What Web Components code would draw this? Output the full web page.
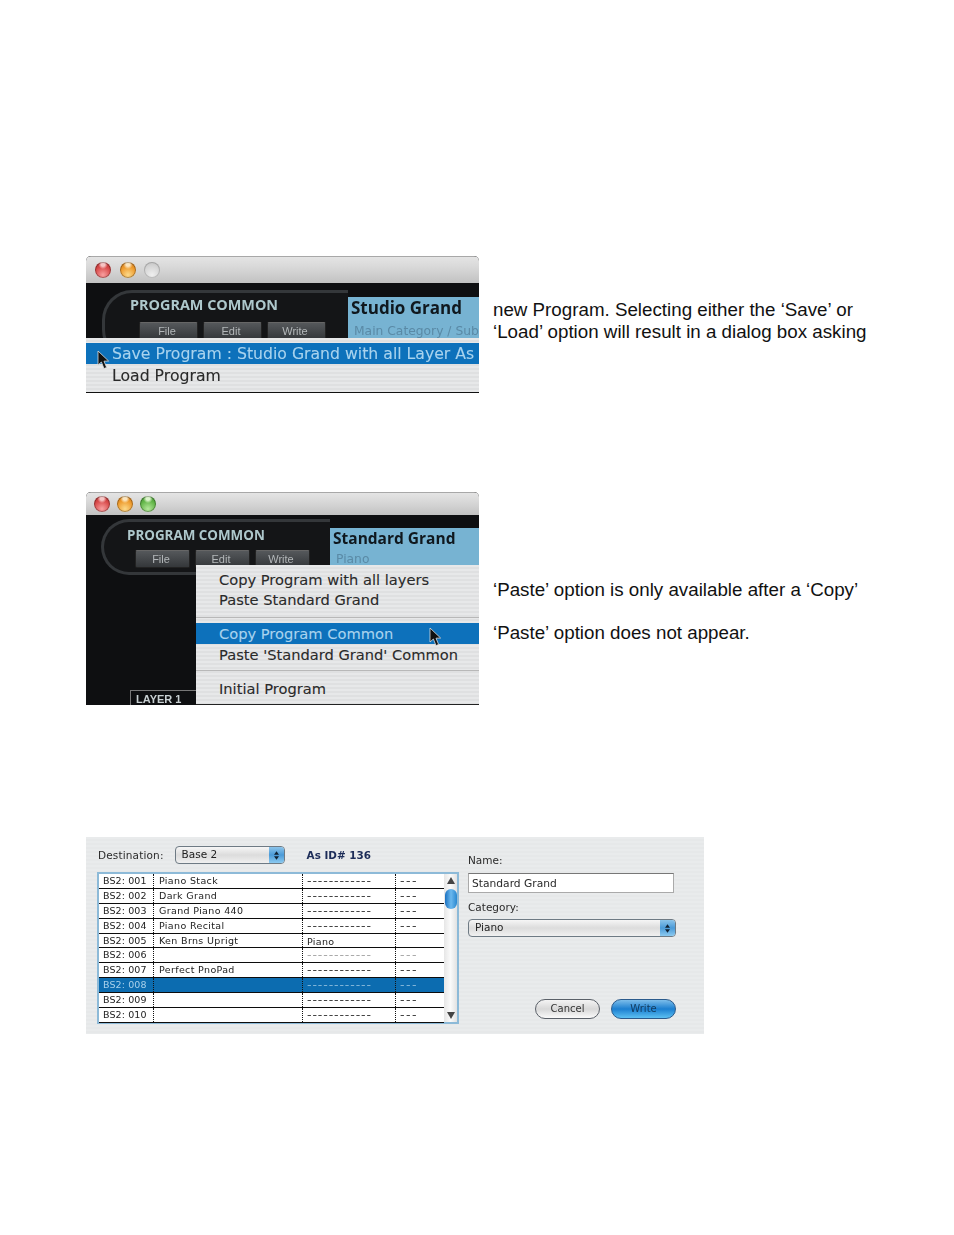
<!DOCTYPE html>
<html>
<head>
<meta charset="utf-8">
<title>Program Common</title>
<style>
  html, body { margin: 0; background: #fff; }
  body { font-family: "Liberation Sans", Arial, sans-serif; }
</style>
</head>
<body>
<manual-page></manual-page>

<script>
const ARROW = `<svg viewBox="0 0 13 20" width="13" height="20"><path d="M1 1 L1 15 L4.4 12 L7 18.6 L9.6 17.4 L7 11.2 L11.6 11 Z" fill="#111" stroke="#ddd" stroke-width=".8"/></svg>`;

class TrafficLights extends HTMLElement {
    constructor() {
        super();
        this.attachShadow({ mode: 'open' });
        this.shadowRoot.innerHTML = `
            <style>
                :host { display: flex; gap: var(--light-gap, 8px); }
                i { display: block; width: 16px; height: 16px; border-radius: 50%; box-shadow: inset 0 0 0 1px rgba(0,0,0,.3); }
                .red { background: radial-gradient(circle at 50% 15%, #f6c4c4 0 12%, transparent 30%), radial-gradient(circle at 50% 80%, #f8a0a0, #d84a4a 55%, #a82a2a); }
                .amber { background: radial-gradient(circle at 50% 15%, #fbe6c0 0 12%, transparent 30%), radial-gradient(circle at 50% 80%, #fbd98a, #ee9a2c 55%, #c06f18); }
                .green { background: radial-gradient(circle at 50% 15%, #dcf4cc 0 12%, transparent 30%), radial-gradient(circle at 50% 80%, #b4e79a, #62b548 55%, #3f8a30); }
                .off { background: radial-gradient(circle at 50% 80%, #efefef, #d4d4d4 60%, #bcbcbc); box-shadow: inset 0 0 0 1px rgba(0,0,0,.18); }
            </style>
            <i class="red"></i><i class="amber"></i><i class="${this.hasAttribute('inactive') ? 'off' : 'green'}"></i>
        `;
    }
}

class SynthWindow extends HTMLElement {
    constructor() {
        super();
        this.attachShadow({ mode: 'open' });
        const buttons = ['File', 'Edit', 'Write'].map(b => `<span class="btn">${b}</span>`).join('');
        this.shadowRoot.innerHTML = `
            <style>
                :host { display: block; position: relative; width: 393px; overflow: hidden; background: #0e0f11; border-radius: 5px 5px 0 0; filter: blur(.35px); font-family: "DejaVu Sans", sans-serif; }
                .title { display: flex; align-items: center; box-sizing: border-box; height: var(--title-h); padding-left: var(--lights-left); padding-bottom: 1px; background: linear-gradient(#e4e4e4, #d8d8d8 40%, #c2c2c2); border-top: 1px solid #a8a8a8; }
                .body { display: flex; align-items: flex-start; padding-left: var(--pill-left); }
                .pill { flex: none; box-sizing: border-box; width: var(--pill-w); height: var(--pill-h); margin-top: var(--pill-top); padding: var(--pill-pad); background: #141517; border: 3px solid #34373a; border-right: 0; border-radius: 30px 0 0 30px; }
                .heading { font: bold var(--head-size)/16px "Open Sans", "DejaVu Sans", sans-serif; color: #aec8cc; white-space: nowrap; }
                .btns { display: flex; gap: var(--btn-gap); margin: var(--btn-top) 0 0 var(--btn-left); }
                .btn { width: var(--btn-w); height: 18px; box-sizing: border-box; padding-right: 3px; text-align: center; font: 11px/16px "Liberation Sans", sans-serif; color: #b4b8ba; background: linear-gradient(#55585b, #34373a); border: 1px solid #222; border-top-color: #666; border-radius: 2px; }
                .patch { flex: none; width: 200px; height: var(--patch-h); margin-top: var(--patch-top); padding: var(--patch-pad); box-sizing: border-box; background: #77b3d2; white-space: nowrap; }
                .name { font: bold var(--name-size)/20px "Open Sans", "DejaVu Sans", sans-serif; color: #10181e; }
                .sub { font: 12.3px/14px "DejaVu Sans", sans-serif; color: #5a8aa6; margin-top: var(--sub-top); padding-left: 3px; }
                ::slotted([slot=menu]) { position: absolute; }
            </style>
            <div class="title"><traffic-lights ${this.hasAttribute('inactive') ? 'inactive' : ''}></traffic-lights></div>
            <div class="body">
                <div class="pill">
                    <div class="heading">PROGRAM COMMON</div>
                    <div class="btns">${buttons}</div>
                </div>
                <div class="patch">
                    <div class="name">${this.getAttribute('patch')}</div>
                    <div class="sub">${this.getAttribute('sub')}</div>
                </div>
            </div>
            <slot></slot>
            <slot name="menu"></slot>
        `;
    }
}

class PopMenu extends HTMLElement {
    constructor() {
        super();
        this.attachShadow({ mode: 'open' });
        this.shadowRoot.innerHTML = `
            <style>
                :host { display: block; box-sizing: border-box; background: repeating-linear-gradient(#e7e8e9 0 2px, #dfe0e1 2px 4px); font-family: "DejaVu Sans", sans-serif; color: #2a2a2a; white-space: nowrap; -webkit-text-stroke: .1px currentColor; }
            </style>
            <slot></slot>
        `;
    }
}

class MenuItem extends HTMLElement {
    constructor() {
        super();
        this.attachShadow({ mode: 'open' });
        this.shadowRoot.innerHTML = `
            <style>
                :host { display: block; height: var(--item-h, 21px); line-height: var(--item-lh, var(--item-h, 21px)); padding-left: var(--item-left, 23px); font-size: var(--item-size, 15px); }
                :host([active]) { background: #0d71bb; color: #a9d3ee; }
            </style>
            <slot></slot>
        `;
    }
}

class SlimSelect extends HTMLElement {
    constructor() {
        super();
        this.attachShadow({ mode: 'open' });
        this.shadowRoot.innerHTML = `
            <style>
                :host { display: flex; box-sizing: border-box; height: 18px; border: 1px solid #6e7a84; border-radius: 4px; overflow: hidden; background: linear-gradient(#f6f6f6, #dcdcdc 50%, #f0f0f0); font: 10.5px/15px "DejaVu Sans", sans-serif; color: #222; }
                .label { flex: 1; padding-left: 6px; }
                .stepper { display: flex; align-items: center; justify-content: center; width: 15px; background: linear-gradient(#8cc4ea, #4a9ad8 50%, #8ccaf0); }
            </style>
            <span class="label"><slot></slot></span>
            <span class="stepper"><svg width="5" height="9" viewBox="0 0 6 10"><path d="M3 0 L6 4 H0 Z M3 10 L0 6 H6 Z" fill="#123"/></svg></span>
        `;
    }
}

class AquaButton extends HTMLElement {
    constructor() {
        super();
        this.attachShadow({ mode: 'open' });
        this.shadowRoot.innerHTML = `
            <style>
                :host { display: block; box-sizing: border-box; width: 65px; height: 20px; text-align: center; border: 1px solid #5a6068; border-radius: 10px; background: linear-gradient(#f4f4f4, #d8d8d8 50%, #fafafa); font: 10px/18px "DejaVu Sans", sans-serif; color: #333; }
                :host([primary]) { background: linear-gradient(#7cbdea, #1c7fd0 50%, #5cc0f2); border-color: #2a5a8c; color: #123a5c; }
            </style>
            <slot></slot>
        `;
    }
}

class ProgramList extends HTMLElement {
    constructor() {
        super();
        this.attachShadow({ mode: 'open' });
        const names = ['Piano Stack', 'Dark Grand', 'Grand Piano 440', 'Piano Recital', 'Ken Brns Uprigt', '', 'Perfect PnoPad', '', '', ''];
        const rows = names.map((name, i) => {
            const id = String(i + 1).padStart(3, '0');
            const isPiano = i === 4;
            const cls = [i === 7 ? 'sel' : '', i === 5 ? 'faint' : ''].join(' ');
            return `<div class="row ${cls}">
                <span class="c">BS2: ${id}</span><span class="c nm">${name}</span>
                <span class="c dash">${isPiano ? '<b>Piano</b>' : '------------'}</span>
                <span class="c dash">${isPiano ? '' : '---'}</span>
            </div>`;
        }).join('');
        this.shadowRoot.innerHTML = `
            <style>
                :host { display: flex; box-sizing: border-box; width: 362px; height: 152px; border: 2px solid #8dbad8; background: #fff; font: 9.5px/14px "DejaVu Sans", sans-serif; color: #222; }
                .rows { width: 345px; }
                .row { display: grid; grid-template-columns: 55px 149px 93px 1fr; box-sizing: border-box; height: 14.9px; border-bottom: 1px solid #0c0c0c; white-space: nowrap; }
                .c { padding-left: 4px; border-right: 1px dotted #111; overflow: hidden; letter-spacing: .1px; }
                .c:last-child { border-right: 0; }
                .nm { padding-left: 5px; letter-spacing: .35px; }
                .dash { color: #444; font-size: 12.5px; letter-spacing: .9px; }
                .dash:last-child { letter-spacing: 1.5px; }
                .dash b { font-weight: normal; font-size: 9.5px; color: #222; letter-spacing: .3px; }
                .faint .dash { color: #aaa; }
                .sel { background: #0c6cb0; color: #a8d0ea; }
                .sel .dash { color: #7fb4d8; }
                .bar { flex: 1; display: flex; flex-direction: column; align-items: center; background: linear-gradient(90deg, #e6e6e6, #fafafa 50%, #e2e2e2); font-size: 0; }
                .thumb { width: 12px; height: 20px; margin-top: 5px; border-radius: 6px; background: linear-gradient(90deg, #1a70c0, #6ab8ee 50%, #2a88d0); }
                .bar svg:last-child { margin-top: auto; margin-bottom: 3px; }
                .bar svg:first-child { margin-top: 3px; }
            </style>
            <div class="rows">${rows}</div>
            <div class="bar">
                <svg width="8" height="7" viewBox="0 0 8 7"><path d="M4 0 L8 7 H0 Z" fill="#444"/></svg>
                <div class="thumb"></div>
                <svg width="8" height="7" viewBox="0 0 8 7"><path d="M4 7 L0 0 H8 Z" fill="#444"/></svg>
            </div>
        `;
    }
}

class WriteDialog extends HTMLElement {
    constructor() {
        super();
        this.attachShadow({ mode: 'open' });
        this.shadowRoot.innerHTML = `
            <style>
                :host { display: flex; box-sizing: border-box; width: 618px; height: 197px; padding: 9px 28px 0 11px; background: repeating-linear-gradient(#e9ebec 0 2px, #e6e8e9 2px 4px); font: 10.5px/14px "DejaVu Sans", sans-serif; color: #2a2a2a; filter: blur(.3px); }
                .left { width: 362px; }
                .dest { display: flex; align-items: center; height: 18px; margin: 0 0 8px 1px; letter-spacing: .15px; }
                .dest slim-select { width: 110px; margin: 0 22px 0 11px; letter-spacing: 0; }
                .dest b { color: #1c2c58; font-size: 10.4px; letter-spacing: 0; }
                .right { flex: 1; margin-left: 9px; display: flex; flex-direction: column; }
                .lbl { height: 14px; }
                .name-label { margin-top: 7px; }
                .input { box-sizing: border-box; width: 206px; height: 20px; margin-top: 6px; padding-left: 3px; border: 1px solid #aaa; border-top-color: #777; background: #fff; font-size: 10.7px; line-height: 19px; }
                .cat-label { margin-top: 7px; }
                .right slim-select { width: 208px; margin-top: 5px; }
                .actions { display: flex; justify-content: flex-end; gap: 11px; margin-top: 62px; }
            </style>
            <div class="left">
                <div class="dest">Destination:<slim-select>Base 2</slim-select><b>As ID# 136</b></div>
                <program-list></program-list>
            </div>
            <div class="right">
                <div class="lbl name-label">Name:</div>
                <div class="input">Standard Grand</div>
                <div class="lbl cat-label">Category:</div>
                <slim-select>Piano</slim-select>
                <div class="actions"><aqua-button>Cancel</aqua-button><aqua-button primary>Write</aqua-button></div>
            </div>
        `;
    }
}

class ManualPage extends HTMLElement {
    constructor() {
        super();
        this.attachShadow({ mode: 'open' });
        this.shadowRoot.innerHTML = `
            <style>
                :host { display: block; box-sizing: border-box; width: 954px; height: 1235px; padding: 256px 0 0 86px; }
                .row { display: flex; gap: 14px; }
                .copy { font: 18.75px/22px "Liberation Sans", Arial, sans-serif; color: #111; white-space: nowrap; }
                .one { height: 137px; }
                .one .copy { padding-top: 43px; }
                .two { height: 213px; margin-top: 99px; }
                .two .copy { padding-top: 87px; line-height: 21.5px; }
                synth-window { height: 100%; flex: none; }
                .dialog { margin-top: 132px; }
                .shot-one {
                    --title-h: 27px; --lights-left: 9px; --light-gap: 8.5px;
                    --pill-left: 16px; --pill-w: 246px; --pill-h: 70px; --pill-top: 7px; --pill-pad: 4px 0 0 25px; --head-size: 14.4px;
                    --btn-w: 59px; --btn-gap: 5px; --btn-top: 9px; --btn-left: 9px;
                    --patch-h: 46px; --patch-top: 14px; --patch-pad: 1px 0 0 3px; --name-size: 17px; --sub-top: 6px;
                }
                .shot-two {
                    --title-h: 23px; --lights-left: 8px; --light-gap: 7px;
                    --pill-left: 15px; --pill-w: 229px; --pill-h: 56px; --pill-top: 4px; --pill-pad: 5px 0 0 23px; --head-size: 13.4px;
                    --btn-w: 55px; --btn-gap: 5px; --btn-top: 7px; --btn-left: 8px;
                    --patch-h: 37px; --patch-top: 13px; --patch-pad: 0 0 0 3px; --name-size: 15.5px; --sub-top: 4px;
                }
                .menu-one { top: 82px; left: 0; right: 0; bottom: 0; padding-top: 5px; border-bottom: 1px solid #111; --item-left: 26px; --item-size: 15.7px; }
                .menu-two { top: 73px; left: 110px; right: 0; bottom: 0; padding-top: 4px; border-bottom: 1px solid #222; --item-size: 14.65px; --item-h: 21px; }
                .menu-two hr { height: 1px; border: 0; margin: 0; background: #b8b8b8; }
                .cursor { position: absolute; z-index: 2; }
                .cursor-one { left: 11px; top: 94px; }
                .cursor-two { left: 343px; top: 135px; }
                .layer { position: absolute; left: 44px; bottom: 0; width: 70px; height: 15px; box-sizing: border-box; padding: 2px 0 0 5px; border: 1px solid #777; border-bottom: 0; font: bold 11px/13px "Liberation Sans", sans-serif; color: #c8d0d2; }
            </style>
            <section class="row one">
                <synth-window class="shot-one" inactive patch="Studio Grand" sub="Main Category / Sub">
                    <pop-menu slot="menu" class="menu-one">
                        <menu-item active style="--item-lh:22px">Save Program : Studio Grand with all Layer As</menu-item>
                        <menu-item style="--item-h:23px">Load Program</menu-item>
                    </pop-menu>
                    <span class="cursor cursor-one">${ARROW}</span>
                </synth-window>
                <div class="copy">new Program. Selecting either the ‘Save’ or<br>‘Load’ option will result in a dialog box asking</div>
            </section>
            <section class="row two">
                <synth-window class="shot-two" patch="Standard Grand" sub="Piano">
                    <span class="layer">LAYER 1</span>
                    <pop-menu slot="menu" class="menu-two">
                        <menu-item style="--item-lh:22px">Copy Program with all layers</menu-item>
                        <menu-item style="--item-lh:20px">Paste Standard Grand</menu-item>
                        <menu-item style="--item-h:6px"></menu-item>
                        <hr>
                        <menu-item style="--item-h:5px"></menu-item>
                        <menu-item active>Copy Program Common</menu-item>
                        <menu-item>Paste 'Standard Grand' Common</menu-item>
                        <menu-item style="--item-h:5px"></menu-item>
                        <hr>
                        <menu-item style="--item-h:7px"></menu-item>
                        <menu-item style="--item-lh:22px">Initial Program</menu-item>
                    </pop-menu>
                    <span class="cursor cursor-two">${ARROW}</span>
                </synth-window>
                <div class="copy">‘Paste’ option is only available after a ‘Copy’<br><br>‘Paste’ option does not appear.</div>
            </section>
            <write-dialog class="dialog"></write-dialog>
        `;
    }
}

// children first, so the page's shadow content upgrades straight away
customElements.define('traffic-lights', TrafficLights);
customElements.define('pop-menu', PopMenu);
customElements.define('menu-item', MenuItem);
customElements.define('synth-window', SynthWindow);
customElements.define('slim-select', SlimSelect);
customElements.define('aqua-button', AquaButton);
customElements.define('program-list', ProgramList);
customElements.define('write-dialog', WriteDialog);
customElements.define('manual-page', ManualPage);
</script>
</body>
</html>
